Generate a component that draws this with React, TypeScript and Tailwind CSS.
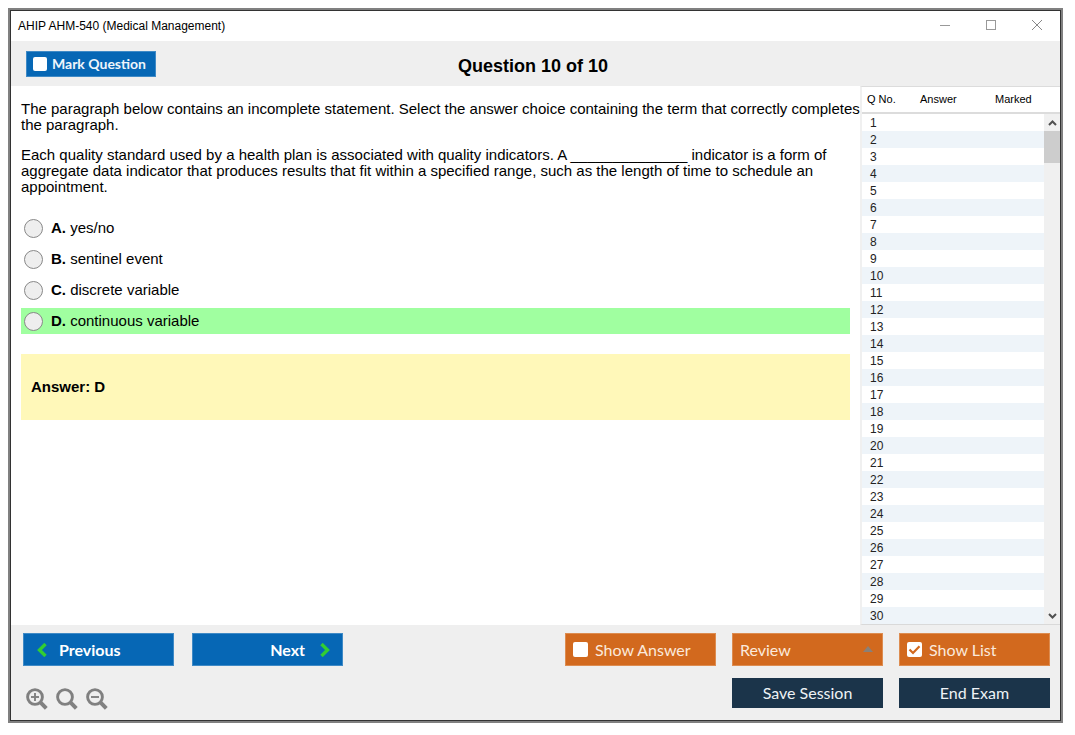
import React, { useState } from 'react';

const options = [
  { letter: 'A', text: 'yes/no', correct: false },
  { letter: 'B', text: 'sentinel event', correct: false },
  { letter: 'C', text: 'discrete variable', correct: false },
  { letter: 'D', text: 'continuous variable', correct: true },
];

const questionNumbers = Array.from({ length: 30 }, (_, i) => i + 1);

interface CheckButtonProps {
  label: string;
  checked: boolean;
  onChange: (checked: boolean) => void;
  className: string;
  boxClass: string;
}

const CheckButton: React.FC<CheckButtonProps> = ({ label, checked, onChange, className, boxClass }) => (
  <label className={`flex items-center border cursor-pointer ${className}`}>
    <span className={`relative shrink-0 ${boxClass}`}>
      <input
        type="checkbox"
        checked={checked}
        onChange={(e) => onChange(e.target.checked)}
        className="block w-full h-full appearance-none rounded-[2px] bg-white"
      />
      {checked && (
        <svg viewBox="0 0 15 15" className="absolute inset-0 w-full h-full pointer-events-none" fill="none" stroke="#d2691e" strokeWidth="2.2">
          <path d="M2.5 7.5 L6 11 L12.5 4.2" />
        </svg>
      )}
    </span>
    {label}
  </label>
);

const ZoomIcon: React.FC<{ sign?: 'plus' | 'minus' }> = ({ sign }) => (
  <svg viewBox="0 0 22 22" className="w-[22px] h-[22px]" fill="none" stroke="#808080">
    <circle cx="9" cy="9" r="7.4" strokeWidth="2.9" />
    <path d="M14.2 14.2 L20.3 20.3" strokeWidth="4" />
    {sign && <path d="M5 9 H13" strokeWidth="1.9" />}
    {sign === 'plus' && <path d="M9 5 V13" strokeWidth="1.9" />}
  </svg>
);

const TitleBar = () => (
  <div className="h-[30px] flex items-center justify-between bg-white pl-[7px] pr-[17px] text-xs">
    <span>AHIP AHM-540 (Medical Management)</span>
    <div className="flex gap-[34px]">
      <button aria-label="Minimize">
        <svg viewBox="0 0 12 12" className="w-3 h-3" stroke="#999" fill="none"><path d="M1 5.5 H11" /></svg>
      </button>
      <button aria-label="Maximize">
        <svg viewBox="0 0 12 12" className="w-3 h-3" stroke="#999" fill="none"><rect x="1.5" y="0.5" width="9" height="9" /></svg>
      </button>
      <button aria-label="Close">
        <svg viewBox="0 0 12 12" className="w-3 h-3" stroke="#888" fill="none"><path d="M1 0 L11 10 M11 0 L1 10" /></svg>
      </button>
    </div>
  </div>
);

const QuestionList = () => (
  <aside className="w-[200px] shrink-0 flex border-l-2 border-b border-t border-l-[#f0f0f0] border-b-[#d9d9d9] border-t-[#dcdcdc] bg-white">
    <table className="flex-1 border-collapse text-left text-[#222]">
      <thead>
        <tr className="h-[26px] border-b-2 border-[#dcdcdc] text-[11px] text-black">
          <th className="font-normal w-[58px] p-0 pl-[5px]">Q No.</th>
          <th className="font-normal w-[75px] p-0">Answer</th>
          <th className="font-normal p-0">Marked</th>
        </tr>
      </thead>
      <tbody className="text-xs leading-4">
        {questionNumbers.map((n) => (
          <tr key={n} className="h-[17px] even:bg-[#eef4f9]">
            <td className="p-0 pt-px pl-2">{n}</td>
            <td className="p-0"></td>
            <td className="p-0"></td>
          </tr>
        ))}
      </tbody>
    </table>
    <div className="w-4 flex flex-col">
      <div className="h-[27px] border-b-2 border-[#dcdcdc]"></div>
      <div className="flex-1 flex flex-col bg-[#f0f0f0]">
        <button aria-label="Scroll up" className="h-[17px] flex items-center justify-center">
          <svg viewBox="0 0 9 6" className="w-[9px] h-[6px]" fill="none" stroke="#505050" strokeWidth="2"><path d="M1 5 L4.5 1.5 L8 5" /></svg>
        </button>
        <div className="h-8 bg-[#cdcdcd]"></div>
        <div className="flex-1"></div>
        <button aria-label="Scroll down" className="h-[17px] flex items-center justify-center">
          <svg viewBox="0 0 9 6" className="w-[9px] h-[6px]" fill="none" stroke="#505050" strokeWidth="2"><path d="M1 1 L4.5 4.5 L8 1" /></svg>
        </button>
      </div>
    </div>
  </aside>
);

export default function App() {
  const [marked, setMarked] = useState(false);
  const [showAnswer, setShowAnswer] = useState(false);
  const [showList, setShowList] = useState(true);

  return (
    <div className="ml-2 mr-3 mt-2 mb-3 border-2 border-[#808080] font-['Liberation_Sans',Arial,sans-serif] text-black">
      <div className="border border-[#333] bg-[#efefef]">
        <TitleBar />

        <header className="h-[45px] grid grid-cols-[1fr_auto_1fr] items-center pl-[15px] pr-5">
          <CheckButton
            label="Mark Question"
            checked={marked}
            onChange={setMarked}
            className="w-[130px] h-[26px] gap-[5px] pl-[6px] bg-[#0667b5] border-[#3f8ac6] text-[#eef5fb] font-['Lato',sans-serif] font-bold text-[14px]"
            boxClass="w-[14px] h-[14px]"
          />
          <h1 className="pt-1 text-lg font-bold">Question 10 of 10</h1>
        </header>

        <main className="flex">
          <section className="flex-1 bg-white pl-[10px] pt-[15px] text-[15px] leading-4">
            <p className="mb-[14px]">
              The paragraph below contains an incomplete statement. Select the answer choice containing the term that correctly completes the paragraph.
            </p>
            <p className="mb-5">
              Each quality standard used by a health plan is associated with quality indicators. A ______________ indicator is a form of aggregate data indicator that produces results that fit within a specified range, such as the length of time to schedule an appointment.
            </p>
            <div className="flex flex-col gap-[5px] mr-[10px]">
              {options.map((o) => (
                <label key={o.letter} className={`h-[26px] flex items-center pl-[3px] ${o.correct ? 'bg-[#a0ffa0]' : ''}`}>
                  <input type="radio" name="answer" className="appearance-none w-[19px] h-[19px] mr-2 rounded-full border border-[#888] bg-[#eee] checked:bg-[#888]" />
                  <span><b>{o.letter}.</b> {o.text}</span>
                </label>
              ))}
            </div>
            <div className="mt-5 mr-[10px] h-[66px] flex items-center pl-[10px] bg-[#fff8b9] font-bold">Answer: D</div>
          </section>
          <QuestionList />
        </main>

        <footer className="h-[95px] flex justify-between pl-3 pr-[10px] pt-2 font-['Lato',sans-serif] text-[16px]">
          <div>
            <div className="flex gap-[18px] font-bold text-white">
              <button className="w-[151px] h-[33px] flex items-center pl-[13px] gap-3 bg-[#0667b5] border border-[#3f8ac6]">
                <svg viewBox="0 0 10 14" className="w-[10px] h-[14px]" fill="none" stroke="#32cd32" strokeWidth="3.4"><path d="M8.5 1 L2.5 7 L8.5 13" /></svg>
                Previous
              </button>
              <button className="w-[151px] h-[33px] flex items-center justify-end pr-3 gap-[15px] bg-[#0667b5] border border-[#3f8ac6]">
                Next
                <svg viewBox="0 0 10 14" className="w-[10px] h-[14px]" fill="none" stroke="#32cd32" strokeWidth="3.4"><path d="M1.5 1 L7.5 7 L1.5 13" /></svg>
              </button>
            </div>
            <div className="flex gap-2 mt-[22px] pl-[3px]">
              <button aria-label="Zoom in"><ZoomIcon sign="plus" /></button>
              <button aria-label="Reset zoom"><ZoomIcon /></button>
              <button aria-label="Zoom out"><ZoomIcon sign="minus" /></button>
            </div>
          </div>

          <div className="grid grid-cols-[151px_151px_151px] gap-x-4 gap-y-3 content-start text-[#fbe9dc]">
            <CheckButton
              label="Show Answer"
              checked={showAnswer}
              onChange={setShowAnswer}
              className="h-[33px] gap-[7px] pl-[7px] bg-[#d2691e] border-[#dd8c50]"
              boxClass="w-[15px] h-[15px]"
            />
            <div className="relative">
              <select aria-label="Review" className="w-full h-[33px] appearance-none pl-[7px] bg-[#d2691e] border border-[#dd8c50]">
                <option>Review</option>
              </select>
              <svg viewBox="0 0 10 6" className="absolute right-[10px] top-[13px] w-[10px] h-[6px] pointer-events-none" fill="#8a8078"><path d="M0 6 L5 0 L10 6 Z" /></svg>
            </div>
            <CheckButton
              label="Show List"
              checked={showList}
              onChange={setShowList}
              className="h-[33px] gap-[7px] pl-[7px] bg-[#d2691e] border-[#dd8c50]"
              boxClass="w-[15px] h-[15px]"
            />
            <button className="col-start-2 h-[30px] bg-[#1b344a] text-[#eef2f5]">Save Session</button>
            <button className="h-[30px] bg-[#1b344a] text-[#eef2f5]">End Exam</button>
          </div>
        </footer>
      </div>
    </div>
  );
}
